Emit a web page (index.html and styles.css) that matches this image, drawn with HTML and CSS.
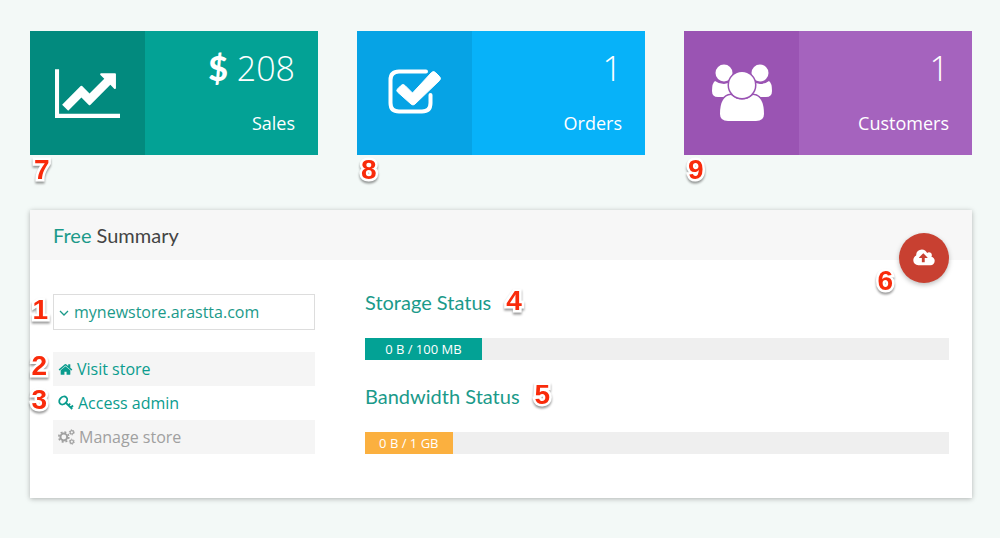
FILE: index.html
```
<!DOCTYPE html>
<html lang="en">
<head>
<meta charset="utf-8">
<title>Store dashboard</title>
<link rel="stylesheet" href="styles.css">
</head>
<body>
<main class="page">
  <section class="tiles">
    <article class="tile tile-sales">
      <div class="tile-icon">
        <svg width="65" height="57" viewBox="0 0 2048 1792" fill="currentColor"><path d="M2048 1536v128h-2048v-1536h128v1408h1920zm-128-1248v435q0 21-19.500 29.500t-35.500-7.500l-121-121-633 633q-10 10-23 10t-23-10l-233-233-416 416-192-192 585-585q10-10 23-10t23 10l233 233 464-464-121-121q-16-16-7.500-35.500t29.500-19.500h435q14 0 23 9t9 23z"/></svg>
      </div>
      <div class="tile-body">
        <p class="tile-value"><span class="currency">$</span> 208</p>
        <p class="tile-label">Sales</p>
      </div>
      <span class="marker marker-tile">7</span>
    </article>
    <article class="tile tile-orders">
      <div class="tile-icon">
        <svg width="54" height="52" viewBox="0 0 54 52" fill="none" stroke="currentColor"><path d="M38 4.500H11Q2.500 4.500 2.500 13V36Q2.500 44.500 11 44.500H34Q42.500 44.500 42.500 36V28" stroke-width="4" stroke-linecap="round"/><path d="M9.500 22L13 18.500Q15 16.500 17 18.500L24.500 26L43.500 5.500Q45.500 3.500 47.500 5.500L51.500 9.500Q53.500 11.500 51.500 13.500L27 37Q25 39 23 37L9.500 25Q8 23.500 9.500 22Z" fill="currentColor"/></svg>
      </div>
      <div class="tile-body">
        <p class="tile-value">1</p>
        <p class="tile-label">Orders</p>
      </div>
      <span class="marker marker-tile">8</span>
    </article>
    <article class="tile tile-customers">
      <div class="tile-icon">
        <svg width="62" height="58" viewBox="0 0 62 58" fill="currentColor"><circle cx="13" cy="9" r="8.500"/><circle cx="49" cy="9" r="8.500"/><path d="M4 17Q8 20 13 20Q17 20 20 17V33H7Q1 33 1 27Q1 19 4 17ZM58 17Q54 20 49 20Q45 20 42 17V33H55Q61 33 61 27Q61 19 58 17Z"/><g class="cutout"><path d="M20 31Q25 35.500 31 35.500T42 31Q53 32 53 50Q53 57 45 57H17Q9 57 9 50Q9 32 20 31Z"/><circle cx="31" cy="21" r="13"/></g></svg>
      </div>
      <div class="tile-body">
        <p class="tile-value">1</p>
        <p class="tile-label">Customers</p>
      </div>
      <span class="marker marker-tile">9</span>
    </article>
  </section>

  <section class="card">
    <header class="card-header"><h2 class="title"><span class="accent">Free</span> Summary</h2></header>
    <button class="upload" type="button" aria-label="Upload">
      <svg width="22" height="20" viewBox="0 0 1920 1792" fill="currentColor"><path d="M1280 864q0-14-9-23l-352-352q-9-9-23-9t-23 9l-351 351q-10 12-10 24 0 14 9 23t23 9h224v352q0 13 9.500 22.500t22.500 9.500h192q13 0 22.500-9.500t9.500-22.500v-352h224q13 0 22.500-9.500t9.500-22.500zm640 288q0 159-112.500 271.500t-271.500 112.500h-1088q-185 0-316.500-131.500t-131.500-316.500q0-130 70-240t188-165q-2-30-2-43 0-212 150-362t362-150q156 0 285.500 87t188.500 231q71-62 166-62 106 0 181 75t75 181q0 76-41 138 130 31 213.500 135.500t83.500 238.500z"/></svg>
      <span class="marker marker-upload">6</span>
    </button>
    <div class="card-body">
      <div class="store">
        <div class="picker">
          <svg class="chevron" width="10" height="6" viewBox="0 0 10 6" fill="none" stroke="currentColor" stroke-width="1.300"><path d="M1 1L5 5L9 1"/></svg>
          <select class="picker-select" aria-label="Store"><option>mynewstore.arastta.com</option></select>
          <span class="marker marker-picker">1</span>
        </div>
        <ul class="links">
          <li class="links-item">
            <a class="link" href="#visit"><svg width="15" height="15" viewBox="0 0 1792 1792" fill="currentColor"><path d="M1472 992v480q0 26-19 45t-45 19h-384v-384h-256v384h-384q-26 0-45-19t-19-45v-480q0-1 .5-3t.5-3l575-474 575 474q1 2 1 6zm223-69l-62 74q-8 9-21 11h-3q-13 0-21-7l-692-577-692 577q-12 8-24 7-13-2-21-11l-62-74q-8-10-7-23.500t11-21.500l719-599q32-26 76-26t76 26l244 204v-195q0-14 9-23t23-9h192q14 0 23 9t9 23v408l219 182q10 8 11 21.500t-7 23.500z"/></svg>Visit store</a>
            <span class="marker marker-link">2</span>
          </li>
          <li class="links-item">
            <a class="link" href="#admin"><svg width="16" height="16" viewBox="0 0 16 16" fill="none" stroke="currentColor" stroke-width="1.800"><ellipse cx="5.200" cy="5.500" rx="4.400" ry="3.500" transform="rotate(-45 5.200 5.500)"/><path d="M7.500 7.500L14.200 14M15 10.500L12.400 13M12.200 8.600L10 10.600"/></svg>Access admin</a>
            <span class="marker marker-link">3</span>
          </li>
          <li class="links-item links-muted">
            <a class="link" href="#manage"><svg width="17" height="16" viewBox="0 0 17 16" fill="none" stroke="currentColor"><circle cx="5.800" cy="8" r="3.400" stroke-width="2"/><circle cx="5.800" cy="8" r="5" stroke-width="1.600" stroke-dasharray="2 1.927"/><circle cx="13.800" cy="3.300" r="1.700" stroke-width="1.200"/><circle cx="13.800" cy="3.300" r="2.500" stroke-width="1" stroke-dasharray="1.300 1.318"/><circle cx="13.800" cy="12.700" r="1.700" stroke-width="1.200"/><circle cx="13.800" cy="12.700" r="2.500" stroke-width="1" stroke-dasharray="1.300 1.318"/></svg>Manage store</a>
          </li>
        </ul>
      </div>
      <div class="usage">
        <div class="meter">
          <h3 class="title accent">Storage Status<span class="marker marker-meter">4</span></h3>
          <div class="track"><div class="fill fill-storage" style="width:20%">0 B / 100 MB</div></div>
        </div>
        <div class="meter">
          <h3 class="title accent">Bandwidth Status<span class="marker marker-meter">5</span></h3>
          <div class="track"><div class="fill fill-bandwidth" style="width:15%">0 B / 1 GB</div></div>
        </div>
      </div>
    </div>
  </section>
</main>
</body>
</html>
```
FILE: styles.css
```
* { box-sizing: border-box; }

body {
  margin: 0;
  background: #f3f9f7;
  font-family: "Open Sans", sans-serif;
  font-size: 16px;
  color: #444;
}

p, h2, h3, ul { margin: 0; padding: 0; }

.page {
  display: flex;
  flex-direction: column;
  gap: 55px;
  padding: 31px 28px 40px 30px;
}

/* Statistic tiles */
.tiles {
  display: grid;
  grid-template-columns: repeat(3, 1fr);
  gap: 39px;
}

.tile {
  position: relative;
  display: grid;
  grid-template-columns: 2fr 3fr;
  color: #fff;
}

.tile-icon {
  display: flex;
  align-items: center;
  justify-content: center;
}

.tile-body {
  padding: 17px 23px 19px;
  text-align: right;
}

.tile-value {
  font-size: 34px;
  font-weight: 300;
  line-height: 40px;
}

.currency {
  font-family: Lato, sans-serif;
  font-weight: 900;
}

.tile-label {
  margin-top: 22px;
  font-size: 18px;
  line-height: 26px;
}

.tile-sales { background: #03a295; }
.tile-sales .tile-icon { background: #028a7e; }
.tile-orders { background: #07b2f9; }
.tile-orders .tile-icon { background: #06a3e5; }
.tile-customers { background: #a563be; }
.tile-customers .tile-icon { background: #9a54b3; }

.cutout {
  stroke: #9a54b3;
  stroke-width: 3;
  paint-order: stroke;
}

/* Numbered callouts */
.marker {
  position: absolute;
  font-family: "Liberation Sans", sans-serif;
  font-size: 28px;
  font-weight: 700;
  line-height: 28px;
  color: #f92b0b;
  -webkit-text-stroke: 5px #fff;
  paint-order: stroke fill;
  stroke-linejoin: round;
  filter: drop-shadow(0 2px 1px rgba(0, 0, 0, 0.4));
}

.marker-tile { left: 4px; top: 100%; margin-top: 1px; }
.marker-upload { right: 56px; top: 34px; }
.marker-picker { right: 100%; top: 2px; margin-right: 5px; }
.marker-link { right: 100%; top: 0; margin-right: 6px; }
.marker-meter { left: 100%; top: -4px; margin-left: 15px; }

/* Summary card */
.card {
  position: relative;
  background: #fff;
  box-shadow: 0 1px 5px rgba(0, 0, 0, 0.28);
}

.card-header {
  padding: 14px 23px;
  background: #f7f7f7;
}

.title {
  position: relative;
  width: fit-content;
  font-family: Lato, sans-serif;
  font-size: 20px;
  font-weight: 400;
  line-height: 22px;
}

.accent { color: #1b9a8a; }

.upload {
  position: absolute;
  top: 23px;
  right: 23px;
  display: flex;
  align-items: center;
  justify-content: center;
  width: 50px;
  height: 50px;
  padding: 0;
  border: 0;
  border-radius: 50%;
  background: #c84031;
  color: #fff;
  box-shadow: 0 2px 5px rgba(0, 0, 0, 0.26);
}

.card-body {
  display: grid;
  grid-template-columns: 262fr 584fr;
  gap: 50px;
  padding: 34px 23px 44px;
}

.picker { position: relative; }

.chevron {
  position: absolute;
  left: 6px;
  top: 16px;
  color: #1b9a8a;
  pointer-events: none;
}

.picker-select {
  display: block;
  width: 100%;
  height: 36px;
  padding: 0 20px;
  border: 1px solid #ddd;
  border-radius: 0;
  appearance: none;
  background: transparent;
  color: #1b9a8a;
  font: inherit;
}

.links {
  margin-top: 22px;
  list-style: none;
}

.links-item { position: relative; }
.links-item:nth-child(odd) { background: #f5f5f5; }

.link {
  display: flex;
  align-items: center;
  gap: 4px;
  padding: 0 5px;
  line-height: 34px;
  color: #0a9c8e;
  text-decoration: none;
}

.links-muted .link { color: #a0a0a0; }

.usage {
  display: flex;
  flex-direction: column;
  gap: 25px;
  margin-top: -3px;
}

.track {
  margin-top: 25px;
  background: #efefef;
}

.fill {
  font-size: 13px;
  line-height: 22px;
  text-align: center;
  color: #fff;
}

.fill-storage { background: #03a295; }
.fill-bandwidth { background: #fbb03f; }
```
